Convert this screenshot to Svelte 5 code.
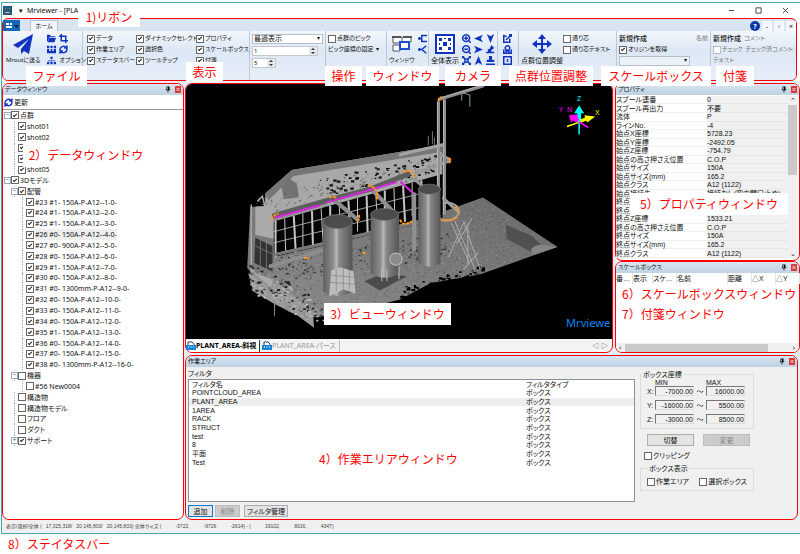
<script lang="ts">
	const icons: Record<string, { d: string; fill?: boolean }> = {
		folder: { d: 'M0 1h4l1 2h6v1H3L1 10H0zM3 5h9l-2 6H1z', fill: true },
		crop: { d: 'M3 0v9h9M0 3h9v9' },
		data: { d: 'M0 1h3v3H0zM4.500 1h3v3h-3zM9 1h3v3H9zM0 5h3v3h2V5h2v3h2V5h3v6H0z', fill: true },
		refresh: { d: 'M1.500 7a4.500 4.500 0 0 1 8-3.500M10.500 5a4.500 4.500 0 0 1-8 3.500M7 4h3.500V.5M5 8H1.500v3.500' },
		nodes: { d: 'M4.500 1h3v3h-3zM0 8h3v3H0zM4.500 8h3v3h-3zM9 8h3v3H9zM5.500 5h1v2h-1zM1 6h10v1H1z', fill: true },
		branch: { d: 'M0 6h5M5 6V2h7M5 6v4h7M2 4v4' },
		fork: { d: 'M0 6h5l6-5M5 6l6 5M2 4v4' },
		zoomin: { d: 'M5.500 1a4.500 4.500 0 1 0 .01 0M9 9l3 3M5.500 3v5M3 5.500h5' },
		zoomout: { d: 'M5.500 1a4.500 4.500 0 1 0 .01 0M9 9l3 3M3 5.500h5' },
		fit: { d: 'M1 1l3 3M11 1L8 4M1 11l3-3M11 11L8 8M4 4h4v4H4zM1 3V1h2M9 1h2v2M1 9v2h2M9 11h2V9' },
		left: { d: 'M0 6l12-5-3 5 3 5z', fill: true },
		right: { d: 'M12 6L0 1l3 5-3 5z', fill: true },
		up: { d: 'M6 0l5 12-5-3-5 3z', fill: true },
		down: { d: 'M6 12L1 0l5 3 5-3z', fill: true },
		tilt: { d: 'M7 0l4 4-4 3v2h4v2H0V9h3L2 6l3-1z', fill: true },
		stamp: { d: 'M4 0h4v5h3v3H1V5h3zM0 10h12v2H0z', fill: true },
		edit: { d: 'M9 6v5H1V3h4M4 8L11 1M8 1h3v3M1 1v2' },
		camera: { d: 'M6 1a3 3 0 1 0 .01 0M1 6v5h10V6M4 11V8h4v3' },
		info: { d: 'M1 1h10v10H1zM6 4v4' }
	};

	const displayChecks = [
		['データ', '作業エリア', 'ステータスバー'],
		['ダイナミックセレクト', '選択色', 'ツールチップ'],
		['プロパティ', 'スケールボックス', '付箋']
	];

	const cameraIcons = ['zoomin', 'left', 'down', 'zoomout', 'right', 'tilt', 'fit', 'up', 'stamp'];

	const groupNotes = [
		{ text: 'ファイル', x: 23, w: 61 },
		{ text: '操作', x: 322, w: 37 },
		{ text: 'ウィンドウ', x: 363, w: 73 },
		{ text: 'カメラ', x: 442, w: 56 },
		{ text: '点群位置調整', x: 506, w: 84 },
		{ text: 'スケールボックス', x: 598, w: 110 },
		{ text: '付箋', x: 713, w: 38 }
	];

	const pipes = [
		'#23 #1- 150A-P-A12--1-0-',
		'#24 #1- 150A-P-A12--2-0-',
		'#25 #1- 150A-P-A12--3-0-',
		'#26 #0- 150A-P-A12--4-0-',
		'#27 #0- 900A-P-A12--5-0-',
		'#28 #0- 150A-P-A12--6-0-',
		'#29 #1- 150A-P-A12--7-0-',
		'#30 #0- 150A-P-A12--8-0-',
		'#31 #0- 1300mm-P-A12--9-0-',
		'#32 #0- 150A-P-A12--10-0-',
		'#33 #0- 150A-P-A12--11-0-',
		'#34 #0- 150A-P-A12--12-0-',
		'#35 #1- 150A-P-A12--13-0-',
		'#36 #0- 150A-P-A12--14-0-',
		'#37 #0- 150A-P-A12--15-0-',
		'#38 #0- 1300mm-P-A12--16-0-'
	];

	type Node = { label: string; level: number; on: boolean; mark?: string };
	const tree: Node[] = [
		{ label: '点群', level: 0, on: true, mark: '−' },
		...['shot01', 'shot02', 'shot03', 'shot04', 'shot05'].map((label) => ({ label, level: 1, on: true })),
		{ label: '3Dモデル', level: 0, on: true, mark: '−' },
		{ label: '配管', level: 1, on: true, mark: '−' },
		...pipes.map((label) => ({ label, level: 2, on: true })),
		{ label: '機器', level: 1, on: false, mark: '−' },
		{ label: '#56 New0004', level: 2, on: false },
		{ label: '構造物', level: 1, on: false },
		{ label: '構造物モデル', level: 1, on: false },
		{ label: 'フロア', level: 1, on: false },
		{ label: 'ダクト', level: 1, on: false },
		{ label: 'サポート', level: 1, on: true, mark: '+' }
	];

	const props = [
		['スプール連番', '0'],
		['スプール再出力', '不要'],
		['流体', 'P'],
		['ラインNo.', '-4'],
		['始点X座標', '5728.23'],
		['始点Y座標', '-2492.05'],
		['始点Z座標', '-754.79'],
		['始点の高さ押さえ位置', 'C.O.P'],
		['始点サイズ', '150A'],
		['始点サイズ(mm)', '165.2'],
		['始点クラス', 'A12 (1122)'],
		['始点接続先', '接続なし(空中開口止め)'],
		['終点X座標', ''],
		['終点Y座標', ''],
		['終点Z座標', '1533.21'],
		['終点の高さ押さえ位置', 'C.O.P'],
		['終点サイズ', '150A'],
		['終点サイズ(mm)', '165.2'],
		['終点クラス', 'A12 (1122)']
	];

	const filters = ['POINTCLOUD_AREA', 'PLANT_AREA', '1AREA', 'RACK', 'STRUCT', 'test', '8', '平面', 'Test'];

	const ranges = [
		['X', '-7000.00', '16000.00'],
		['Y', '-16000.00', '5500.00'],
		['Z', '-3000.00', '8500.00']
	];

	// fixed seed, so the point cloud is the same on every load
	let seed = 7;
	function rnd() {
		seed = (seed * 16807) % 2147483647;
		return seed / 2147483647;
	}

	function cloud(n: number, x: number, y: number, w: number, h: number, slope: number, size = 1) {
		let d = '';
		for (let i = 0; i < n; i++) {
			const px = x + rnd() * w;
			const py = y + rnd() * h + (px - x) * slope;
			const s = size * (0.5 + rnd());
			d += `M${px.toFixed(1)} ${py.toFixed(1)}h${(s * 1.5).toFixed(1)}v${s.toFixed(1)}h${(-s * 1.5).toFixed(1)}z`;
		}
		return d;
	}

	const groundDark = cloud(1600, 250, 245, 310, 90, -0.2, 0.7);
	const groundLight = cloud(1600, 250, 245, 310, 90, -0.2, 0.7);
	const roofHoles = cloud(75, 320, 181, 115, 17, -0.22, 1.6);
	const wallSpeck = cloud(260, 256, 200, 185, 26, -0.24, 0.8);
	const fringe = cloud(110, 400, 288, 85, 14, -0.29, 1.6);
	const rubble = cloud(80, 250, 264, 72, 25, 0.45, 1.4);
	const yard = cloud(220, 278, 258, 170, 26, -0.15, 1);
	const mullions = Array.from({ length: 17 }, (_, i) => 277 + i * 9);
</script>

{#snippet icon(name: string)}
	<svg class="icon" class:fill={icons[name].fill} viewBox="0 0 12 12" aria-hidden="true">
		<path d={icons[name].d} />
	</svg>
{/snippet}

{#snippet check(label: string, on = false, disabled = false)}
	<label class="check" class:disabled><input type="checkbox" checked={on} {disabled} />{label}</label>
{/snippet}

{#snippet caption(text: string)}
	<header class="caption">
		<h2>{text}</h2>
		<button class="pin" aria-label="固定">
			<svg viewBox="0 0 8 8"><path d="M2 0h4v4h1v1H4.500v3h-1V5H1V4h1zM3 1v3h1V1z" /></svg>
		</button>
		<button class="close" aria-label="閉じる">
			<svg viewBox="0 0 8 8"><path d="M2 2l4 4M6 2L2 6" /></svg>
		</button>
	</header>
{/snippet}

{#snippet docIcon()}
	<svg class="doc" viewBox="0 0 10 10" aria-hidden="true">
		<path d="M2 4V1h4l2 2v1" fill="#fff" stroke="#246" />
		<path d="M0 4h10v5H0z" fill="#1784d8" />
		<path d="M2 6h1M4.500 6h1M7 6h1" stroke="#fff" />
	</svg>
{/snippet}

<div class="page">
	<div class="app">
		<header class="titlebar">
			<svg class="logo" viewBox="0 0 10 10" aria-hidden="true">
				<path d="M0 0h10v10H0z" fill="#0b75bd" />
				<path d="M2 2h2v2H2zM6 2h2v2H6zM2 6h6v2H2z" fill="#fff" />
			</svg>
			<span class="quick">▾</span>
			<h1>Mrviewer - [PLANT_AREA]</h1>
			<button aria-label="最小化"><svg viewBox="0 0 8 8"><path d="M1 4h6" /></svg></button>
			<button aria-label="最大化"><svg viewBox="0 0 8 8"><path d="M1 1h6v6H1z" /></svg></button>
			<button aria-label="閉じる"><svg viewBox="0 0 8 8"><path d="M1 1l6 6M7 1L1 7" /></svg></button>
		</header>

		<section class="ribbon">
			<nav>
				<button class="file" aria-label="メニュー">
					<svg viewBox="0 0 14 8"><path d="M1 1h3v2H1zM5 1h2v2H5zM1 4h6v2H1z" fill="#fff" /><path d="M9 3h5l-2.500 3z" fill="#124" /></svg>
				</button>
				<button class="tab">ホーム</button>
				<div class="mdi">
					<button class="help" aria-label="ヘルプ">?</button>
					<button>-</button>
					<button>▫</button>
					<button>×</button>
				</div>
			</nav>
			<div class="groups">
				<div class="group file-group">
					<button class="big send">
						<svg class="plane" viewBox="0 0 20 20" aria-hidden="true"><path d="M20 0L0 11l5 3L16 5 8 15v5l3-3 5 3z" /></svg>
						Mroutに送る
					</button>
					<div class="grid2">
						{@render icon('folder')}{@render icon('crop')}
						{@render icon('data')}{@render icon('refresh')}
						{@render icon('nodes')}<span>オプション</span>
					</div>
				</div>
				<div class="group show">
					{#each displayChecks as col}
						<div class="stack">
							{#each col as label}{@render check(label, true)}{/each}
						</div>
					{/each}
				</div>
				<div class="group stack">
					<span class="select"><select aria-label="表示"><option>最適表示</option></select></span>
					<span class="spin wide"><input aria-label="点の大きさ" value="1" /><i></i></span>
					<span class="spin"><input aria-label="線の太さ" value="5" /><i></i></span>
				</div>
				<div class="group stack">
					{@render check('点群のピック')}
					<button class="drop">ピック座標の固定</button>
				</div>
				<div class="group">
					<button class="big windows">
						<svg viewBox="0 0 20 16" aria-hidden="true">
							<path d="M1 1h9v6H1zM11 1h8v5h-8M1 9h7v6H1z" fill="#fff" stroke="#555" />
							<path d="M0 0h9v2H0zM11 0h9v2h-9z" fill="#555" />
							<path d="M8 6h9v7H8z" fill="#fff" stroke="#1a4fd6" stroke-width="2" />
						</svg>
						ウィンドウ
					</button>
					<div class="icons">{@render icon('branch')}{@render icon('fork')}</div>
				</div>
				<div class="group">
					<button class="big">
						<svg class="all" viewBox="0 0 20 20" aria-hidden="true">
							<path d="M1 1h18v18H1z" fill="#fff" stroke="#1034c0" stroke-width="2" />
							<path d="M4 4h3v3H4zM13 4h3v3h-3zM8 8h4v4H8zM4 13h3v3H4zM13 13h3v3h-3zM9 4h2v1H9zM4 9h1v2H4zM15 9h1v2h-1z" />
						</svg>
						全体表示
					</button>
					<div class="icons three">
						{#each cameraIcons as name}{@render icon(name)}{/each}
					</div>
				</div>
				<div class="group">
					<div class="icons">{@render icon('edit')}{@render icon('camera')}{@render icon('info')}</div>
				</div>
				<div class="group">
					<button class="big">
						<svg class="move" viewBox="0 0 20 20" aria-hidden="true">
							<path d="M10 0l4 5h-3v4h4V6l5 4-5 4v-3h-4v4h3l-4 5-4-5h3v-4H5v3l-5-4 5-4v3h4V5H6z" />
						</svg>
						点群位置調整
					</button>
					<div class="stack">
						{@render check('通り芯')}
						{@render check('通り芯テキスト')}
					</div>
				</div>
				<div class="group stack">
					<div class="spread"><b>新規作成</b><span class="dim">名前</span></div>
					{@render check('オリジンを取得', true)}
					<span class="select empty"><select aria-label="スケールボックス"></select></span>
				</div>
				<div class="group stack">
					<div class="pair"><b>新規作成</b><span class="dim">コメント</span></div>
					<div class="pair">{@render check('チェック', false, true)}<span class="dim">チェック済コメント</span></div>
					<span class="dim">テキスト</span>
				</div>
			</div>
			<span class="note ribbon-note">1)リボン</span>
			<span class="note show-note">表示</span>
			{#each groupNotes as note}
				<span class="note group-note" style="left: {note.x}px; width: {note.w}px">{note.text}</span>
			{/each}
		</section>

		<main>
			<aside class="panel data">
				{@render caption('データウィンドウ')}
				<button class="reload">{@render icon('refresh')}更新</button>
				<ul>
					{#each tree as node, i}
						<li class="level{node.level}" class:current={i === 11}>
							{#if node.mark}<span class="mark">{node.mark}</span>{/if}
							{@render check(node.label, node.on)}
						</li>
					{/each}
				</ul>
				<span class="note data-note">2）データウィンドウ</span>
			</aside>

			<div class="work">
				<div class="upper">
					<section class="panel view">
						<svg class="scene" viewBox="186 87 426 252" preserveAspectRatio="xMidYMid slice" role="img" aria-label="プラント点群">
							<defs>
								<linearGradient id="tank">
									<stop offset="0" stop-color="#606060" />
									<stop offset="0.350" stop-color="#8d8d8d" />
									<stop offset="0.450" stop-color="#b8b8b8" />
									<stop offset="0.550" stop-color="#888" />
									<stop offset="1" stop-color="#555" />
								</linearGradient>
								<linearGradient id="road" x1="0" y1="1" x2="1" y2="0">
									<stop offset="0" stop-color="#8c8c8c" />
									<stop offset="1" stop-color="#6a6a6a" />
								</linearGradient>
								<clipPath id="ground">
									<path d="M249 264L275 250 440 214 482 199 556 248 480 275 430 284 400 300 345 314 312 318 285 298 258 286z" />
								</clipPath>
							</defs>
							<rect x="186" y="87" width="426" height="252" fill="#000" />
							<g clip-path="url(#ground)">
								<path d="M249 264L275 250 440 214 482 199 556 248 480 275 400 304 320 320 258 290z" fill="url(#road)" />
								<path d={groundDark} fill="#444" opacity="0.500" />
								<path d={groundLight} fill="#b5b5b5" opacity="0.400" />
								<path d="M505 226L530 237 541 247 530 253 505 240z" fill="#484848" opacity="0.800" />
								<path d="M529 251q4-6 14-5l13 2-24 8z" fill="#858585" />
							</g>
							<path d={yard} fill="#333" />
							<path d="M267 195L293 172 442 147 442 212 275 254 266 215z" fill="#a8a8a8" />
							<path d="M267 195L293 172 442 147V154L295 178 270 202z" fill="#767676" />
							<path d="M283 188l8-7 7 4 2 14-15 2z" fill="#737373" />
							<path d={wallSpeck} fill="#666" />
							<path d={roofHoles} fill="#111" />
							<path d="M275 223L442 176V220L275 258z" fill="#050505" />
							<g stroke="#c4c4c4">
								{#each mullions as x, i}
									<path d="M{x} {223 - (x - 275) * 0.28}l{i % 3} {36 - (i % 2) * 3}" stroke-width={i % 2 ? 1 : 2} />
								{/each}
								<path d="M275 233L440 190M275 244L440 204M275 255L440 217" stroke-width="0.800" />
								<path d="M275 256L440 219" stroke="#777" stroke-width="3" />
							</g>
							<path d="M252 208l21 2 3 62-18 6-9-9z" fill="#7a7a7a" />
							<path d="M257 208l18-1v33l-18-4z" fill="#aaa" />
							<path d="M257 239l17 8v25l-18-8z" fill="#333" />
							<path d="M257 247l17 8M262 240v27M268 242v28" stroke="#888" stroke-width="0.700" />
							<path d="M253 206v80M259 203l5-5 3 12" stroke="#aaa" stroke-width="1.500" fill="none" />
							<path d="M250 274l32 12 32 26 1 16-16-12-24-12-20-12z" fill="#9a9a9a" />
							<path d={rubble} fill="#222" />
							<path d={rubble} fill="#b5b5b5" transform="translate(2 5)" />
							<path d="M252 272l23 8-2 9zM276 302v14M300 306l8 13M285 298l5 14" fill="#aaa" stroke="#8c8c8c" />
							<path d={fringe} fill="#000" />
							<g fill="none" stroke-linecap="round">
								<path d="M276 220L326 205M332 199l26 22M371 190l22 23M272 267L322 252" stroke="#8d8d8d" stroke-width="4" />
								<path d="M276 217L328 202 370 191 408 176" stroke="#5e5e5e" stroke-width="5" />
								<path d="M277 219L320 207M328 204L396 184M401 184l12 11" stroke="#d927df" stroke-width="2" />
								<path d="M414 196v54" stroke="#909090" stroke-width="4" />
								<path d="M416 175L449 163M449 162L438 155M414 181l12 10M443 200l14 13" stroke="#999" stroke-width="3" />
								<path d="M438 105V198M444 103V215M439 102L482 89" stroke="#8f8f8f" stroke-width="3" />
								<path d="M437 105V198M443 103V215M439 101L481 88" stroke="#d2d2d2" stroke-width="0.600" />
								<path d="M461 94v9M463 96l6 2v11" stroke="#79a786" />
								<path d="M400 157L442 147" stroke="#a4a4a4" stroke-width="3" />
								<path d="M428 139v8M432 134v12M434 140v7" stroke="#777" />
								<path d="M443 205c8-2 16 2 15 9s-13 10-20 6" stroke="#a0a0a0" stroke-width="2" />
								<path d="M454 222l20 48M463 223l16 47M451 225l17 37M456 245l15-25M448 258l15-34M467 225v40M463 270l14-16" stroke="#aaa" />
							</g>
							<g fill="none" stroke="#ff9420" stroke-width="2" stroke-dasharray="3 1">
								<path d="M273 221q2-5 7-6M330 199h8M357 222q4-1 2-6M368 187q11 2 9 15M403 174q9-4 11 5M438 104q0-4 4-4M448 160q4 3 0 5M400 221q3 8 13 1M438 219q10 6 19-1M454 208q5 4 4 8" />
								<path d="M305 259h5M363 254h4" />
							</g>
							<path d="M365 282l18-8 24 3-27 14z" fill="#4b4b4b" />
							<path d="M324 223v69q14 9 29 0V223z" fill="url(#tank)" />
							<ellipse cx="338.500" cy="223" rx="14.500" ry="7" fill="#4c4c4c" stroke="#777" stroke-width="0.700" />
							<path d="M371 216v58q14 9 28 0V216z" fill="url(#tank)" />
							<ellipse cx="385" cy="216" rx="14" ry="6" fill="#4c4c4c" stroke="#777" stroke-width="0.700" />
							<path d="M418 191v73q11 7 22 0V191z" fill="url(#tank)" />
							<ellipse cx="429" cy="191" rx="11" ry="5" fill="#4c4c4c" stroke="#777" stroke-width="0.700" />
							<circle cx="396" cy="260" r="6" fill="#8a8a8a" stroke="#bbb" />
							<path d="M332 271l9-3 13 4 2 22-12-4-14 7z" fill="#bdbdbd" />
							<path d="M331 276l23 2M331 283l24 2M337 270v22M344 269v21M350 271v20" stroke="#878787" stroke-width="0.700" />
							<path d="M382 269v13M387 270v12M399 267v13" stroke="#bcbcbc" />
							<g fill="none" stroke-width="1.500">
								<path d="M577 137V110" stroke="#0ff" />
								<path d="M565 129L588 121" stroke="#ff0" />
								<path d="M586 130L568 119" stroke="#f0f" />
							</g>
							<path d="M577 108l5 8h-3v8h-4v-8h-3z" fill="#0ff" />
							<path d="M593 119l-8 6-1-2-5 2-1-3 5-2-1-2z" fill="#ff0" />
							<path d="M567 118l9-1-1 2 2 3-3 3-3-2-2 2z" fill="#f0f" />
							<g class="axes">
								<text x="575" y="104" fill="#0ff">Z</text>
								<text x="593" y="118" fill="#ff0">X</text>
								<text x="557" y="115" fill="#f0f">Y</text>
								<text x="565" y="115" fill="#f0f">N</text>
							</g>
							<text class="brand" x="564" y="327">Mrviewe</text>
						</svg>
						<nav class="tabs">
							<button class="active">{@render docIcon()}PLANT_AREA-斜視</button>
							<button>{@render docIcon()}PLANT_AREA-パース</button>
							<span>◁</span><span>▷</span>
						</nav>
						<span class="note view-note">3）ビューウィンドウ</span>
					</section>

					<div class="side">
						<section class="panel">
							{@render caption('プロパティ')}
							<div class="scrolled">
								<table>
									<tbody>
										{#each props as [name, value]}
											<tr><th scope="row">{name}</th><td>{value}</td></tr>
										{/each}
									</tbody>
								</table>
								<div class="vbar"><span>⌃</span><i></i><span>⌄</span></div>
							</div>
							<span class="note prop-note">5）プロパティウィンドウ</span>
						</section>
						<section class="panel scale">
							{@render caption('スケールボックス')}
							<table class="columns">
								<thead>
									<tr>
										<th>番…</th><th>表示</th><th>スケ…</th><th class="name">名前</th><th>距離</th><th>△X</th><th>△Y</th>
									</tr>
								</thead>
							</table>
							<p class="side-notes"><span>6）スケールボックスウィンドウ</span><span>7）付箋ウィンドウ</span></p>
							<div class="hbar"><span>‹</span><i></i><span>›</span></div>
						</section>
					</div>
				</div>

				<section class="panel area">
					{@render caption('作業エリア')}
					<div class="area-body">
						<div class="filters">
							<h3>フィルタ</h3>
							<div class="list">
								<table>
									<thead>
										<tr><th>フィルタ名</th><th class="type">フィルタタイプ</th></tr>
									</thead>
									<tbody>
										{#each filters as name, i}
											<tr class:selected={i === 1}><td>{name}</td><td class="type">ボックス</td></tr>
										{/each}
									</tbody>
								</table>
							</div>
							<div class="buttons">
								<button class="add">追加</button>
								<button disabled>削除</button>
								<button class="manage">フィルタ管理</button>
							</div>
						</div>
						<div class="box">
							<fieldset>
								<legend>ボックス座標</legend>
								<div class="minmax"><span>MIN</span><span>MAX</span></div>
								{#each ranges as [axis, min, max]}
									<div class="range">
										<label for="min{axis}">{axis}:</label>
										<input id="min{axis}" value={min} />
										<span>～</span>
										<input aria-label="{axis} MAX" value={max} />
									</div>
								{/each}
							</fieldset>
							<div class="actions"><button>切替</button><button disabled>変更</button></div>
							<div class="clip">{@render check('クリッピング')}</div>
							<fieldset class="boxes">
								<legend>ボックス表示</legend>
								{@render check('作業エリア')}
								{@render check('選択ボックス')}
							</fieldset>
						</div>
					</div>
					<span class="note area-note">4）作業エリアウィンドウ</span>
				</section>
			</div>
		</main>

		<footer>
			<span>表示/選択/全体 (</span><span>17,025,318/</span><span>20,145,803/</span><span>20,145,803) 全体サイズ (</span>
			<span class="num">-3722,</span><span class="num">-9726</span><span class="num">-2614) - (</span>
			<span class="num">19102,</span><span class="num">8016,</span><span class="num">4347)</span>
		</footer>
	</div>
	<p class="status-note">8）ステイタスバー</p>
</div>

<style>
	:global(body) {
		background: #fff;
	}

	.page {
		--red: #f00;
		--blue: #1034c0;
		--teal: #48a9a9;
		display: flex;
		flex-direction: column;
		min-height: 100vh;
		box-sizing: border-box;
		padding: 2px 0 0 1px;
		font-family: 'Noto Sans', 'Noto Sans CJK JP', sans-serif;
		font-size: 7px;
		line-height: 9px;
		color: #111;
		font-feature-settings: 'palt';
	}

	.page :is(h1, h2, h3, p, ul, fieldset) {
		margin: 0;
		padding: 0;
		font-size: inherit;
		font-weight: inherit;
	}

	button,
	input,
	select {
		font: inherit;
		font-feature-settings: inherit;
		color: inherit;
		box-sizing: border-box;
		border: none;
		background: none;
		padding: 0;
		margin: 0;
		border-radius: 0;
	}

	button {
		white-space: nowrap;
	}

	.app {
		flex: 1;
		display: flex;
		flex-direction: column;
		border: 1px solid var(--teal);
		border-right: none;
	}

	.titlebar {
		display: flex;
		align-items: center;
		height: 15px;
		padding: 0 11px 0 1px;
	}

	.logo {
		width: 9px;
		height: 9px;
	}

	.quick {
		margin: 0 4px 0 7px;
	}

	.titlebar h1 {
		flex: 1;
	}

	.titlebar button {
		width: 7px;
		margin-left: 20px;
	}

	.titlebar svg {
		display: block;
		fill: none;
		stroke: #333;
	}

	.ribbon {
		position: relative;
		border: 1px solid var(--red);
		border-radius: 6px;
		margin-right: 3px;
		background: #d9e4f1;
		font-size: 6px;
	}

	.ribbon nav {
		display: flex;
		align-items: flex-end;
		height: 12px;
	}

	.file {
		width: 17px;
		height: 11px;
		background: #1568b5;
	}

	.file svg {
		width: 14px;
		display: block;
		margin: auto;
	}

	.tab {
		width: 28px;
		height: 11px;
		margin-left: 10px;
		background: #f4f8fd;
		border: 1px solid #b3c4d8;
		border-bottom: none;
	}

	.mdi {
		display: flex;
		gap: 2px;
		margin-left: auto;
	}

	.mdi button {
		width: 10px;
		height: 10px;
		background: #f4f8fd;
		font-size: 7px;
	}

	.mdi .help {
		border-radius: 50%;
		background: #0b35a8;
		color: #fff;
		font-weight: bold;
	}

	.groups {
		display: grid;
		grid-template-columns: 80px 167px 76px 61px 42px 69px 21px 98px 94px 1fr;
		height: 49px;
		background: linear-gradient(#f3f7fc, #dde8f5 40%, #e6eef8);
		border-radius: 0 0 5px 5px;
	}

	.group {
		display: flex;
		padding: 3px 2px 2px;
		border-right: 1px solid #b9c8da;
		min-width: 0;
		white-space: nowrap;
	}

	.group:last-child {
		border-right: none;
	}

	.stack {
		display: flex;
		flex-direction: column;
		gap: 2px;
		align-items: flex-start;
	}

	.show {
		display: grid;
		grid-template-columns: 49px 60px 50px;
		padding-left: 4px;
	}

	.check {
		display: flex;
		align-items: center;
		gap: 1px;
		white-space: nowrap;
	}

	.check.disabled,
	.dim {
		color: #777;
	}

	.check input {
		appearance: none;
		flex: none;
		width: 8px;
		height: 8px;
		background: #fff;
		border: 1px solid #666;
		display: grid;
		place-items: center;
	}

	.check.disabled input {
		border-color: #bbb;
	}

	.check input:checked::after {
		content: '';
		width: 1px;
		height: 3px;
		margin-bottom: 1px;
		border: solid #111;
		border-width: 0 1px 1px 0;
		transform: rotate(45deg);
	}

	.icon {
		flex: none;
		width: 9px;
		height: 9px;
		fill: none;
		stroke: var(--blue);
		stroke-width: 2;
	}

	.icon.fill {
		fill: var(--blue);
		stroke: none;
	}

	.big {
		display: flex;
		flex-direction: column;
		align-items: center;
		justify-content: flex-start;
		gap: 2px;
		flex: none;
		font-size: 7px;
	}

	.send,
	.windows {
		font-size: 6px;
	}

	.big svg {
		width: 20px;
		height: 20px;
		fill: var(--blue);
	}

	.file-group {
		gap: 7px;
		padding-left: 3px;
	}

	.grid2 {
		display: grid;
		grid-template-columns: 9px 9px;
		gap: 2px 3px;
		align-content: start;
	}

	.icons {
		display: grid;
		grid-template-columns: 9px;
		gap: 2px;
		margin-left: 3px;
		align-content: start;
	}

	.three {
		grid-template-columns: 9px 9px 9px;
		gap: 2px 3px;
	}

	.select {
		position: relative;
		width: 71px;
		height: 10px;
		box-sizing: border-box;
		background: #fff;
		border: 1px solid #b5bfcb;
	}

	.select::after {
		content: '▾';
		position: absolute;
		right: 2px;
		top: -1px;
		pointer-events: none;
	}

	.select select {
		appearance: none;
		display: block;
		width: 100%;
		height: 8px;
		line-height: 8px;
		padding-left: 1px;
		font-size: 7px;
	}

	.empty {
		background: #edf2f8;
	}

	.spin {
		display: flex;
		align-items: center;
		width: 24px;
		height: 10px;
		box-sizing: border-box;
		border: 1px solid #c0c8d2;
		background: #fff;
	}

	.spin.wide {
		width: 66px;
	}

	.spin input {
		flex: 1;
		min-width: 0;
		width: 0;
		height: 8px;
		padding-left: 1px;
	}

	/* up and down arrows */
	.spin i {
		display: flex;
		flex-direction: column;
		align-items: center;
		justify-content: center;
		gap: 2px;
		width: 8px;
		height: 8px;
		background: #e8e8e8;
	}

	.spin i::before,
	.spin i::after {
		content: '';
		border: 2px solid transparent;
		border-top: none;
		border-bottom: 2px solid #333;
	}

	.spin i::after {
		border-bottom: none;
		border-top: 2px solid #333;
	}

	.drop::after {
		content: '▾';
		margin-left: 3px;
	}

	.spread,
	.pair {
		display: flex;
		gap: 3px;
	}

	.spread {
		align-self: stretch;
		justify-content: space-between;
	}

	b {
		font-size: 7px;
		font-weight: 500;
	}

	.note {
		position: absolute;
		z-index: 2;
		background: #fff;
		color: var(--red);
		font-size: 12px;
		line-height: 20px;
		text-align: center;
		white-space: nowrap;
		font-feature-settings: normal;
		font-family: 'Noto Sans CJK JP', sans-serif;
	}

	.ribbon-note {
		left: 75px;
		top: -12px;
		width: 62px;
	}

	.show-note {
		left: 183px;
		top: 43px;
		width: 37px;
	}

	.group-note {
		top: 47px;
	}

	main {
		flex: 1;
		display: flex;
		gap: 1px;
		padding-top: 2px;
		background: #e4eef5;
	}

	.panel {
		position: relative;
		display: flex;
		flex-direction: column;
		box-sizing: border-box;
		border: 1px solid var(--red);
		border-radius: 7px;
		background: #fff;
	}

	.caption {
		display: flex;
		align-items: center;
		gap: 4px;
		height: 11px;
		padding: 0 2px;
		background: linear-gradient(#d8e4f0, #bfd2e4);
		border-radius: 6px 6px 0 0;
		font-size: 6px;
	}

	.caption h2 {
		flex: 1;
	}

	.caption button {
		width: 6px;
		height: 7px;
	}

	.caption svg {
		display: block;
		width: 6px;
		height: 7px;
	}

	.close {
		background: #d63a3a;
	}

	.close svg {
		fill: none;
		stroke: #fff;
	}

	.data {
		width: 182px;
		flex: none;
	}

	.reload {
		display: flex;
		align-items: center;
		gap: 1px;
		height: 15px;
		padding-left: 1px;
		border-bottom: 1px solid #999;
	}

	ul {
		display: grid;
		grid-auto-rows: 1fr;
		min-height: 336px;
		list-style: none;
	}

	li {
		position: relative;
		display: flex;
		align-items: center;
		justify-self: start;
		padding-left: 8px;
	}

	.level1 {
		padding-left: 15px;
	}

	.level2 {
		padding-left: 23px;
	}

	/* tree guide line in front of each child */
	.level1::before,
	.level2::before {
		content: '';
		align-self: stretch;
		width: 2px;
		margin-left: -4px;
		margin-right: 1px;
		border-left: 1px dotted #aaa;
	}

	.mark {
		position: absolute;
		left: 1px;
		width: 5px;
		height: 5px;
		border: 1px solid #9ab;
		background: #fff;
		color: #248;
		font-size: 6px;
		line-height: 5px;
		text-align: center;
	}

	.level1 .mark {
		left: 8px;
	}

	.current {
		background: linear-gradient(90deg, transparent 32px, #eee 32px);
	}

	.data-note {
		left: 20px;
		top: 59px;
		width: 126px;
		line-height: 24px;
	}

	.work {
		flex: 1;
		min-width: 0;
		display: flex;
		flex-direction: column;
		gap: 2px;
	}

	.upper {
		flex: 1;
		display: flex;
		gap: 2px;
	}

	.view {
		flex: 1;
		min-width: 0;
		background: #f3f3f3;
	}

	.scene {
		flex: 1;
		width: 100%;
		height: 0;
		min-height: 252px;
		border-radius: 6px 6px 0 0;
	}

	.axes {
		font-size: 7px;
	}

	.brand {
		font-size: 11px;
		fill: #0a84f0;
	}

	.tabs {
		display: flex;
		align-items: center;
		height: 13px;
		gap: 2px;
		padding-right: 4px;
		color: #555;
	}

	.tabs button {
		display: flex;
		align-items: center;
		height: 12px;
		padding-right: 3px;
		border-right: 1px solid #bbb;
		color: #999;
	}

	.tabs .active {
		color: #000;
		font-weight: bold;
		background: #fff;
		border-right-color: #333;
		border-radius: 0 0 0 6px;
	}

	.tabs button + span {
		margin-left: auto;
	}

	.doc {
		width: 10px;
		height: 10px;
	}

	.view-note {
		left: 138px;
		top: 219px;
		width: 127px;
		line-height: 22px;
	}

	.side {
		width: 185px;
		flex: none;
		display: flex;
		flex-direction: column;
	}

	.scrolled {
		display: flex;
		padding: 1px 2px 2px 0;
	}

	table {
		border-collapse: collapse;
		table-layout: fixed;
		width: 100%;
		line-height: 8px;
		font-family: 'Liberation Sans', 'Noto Sans CJK JP', sans-serif;
	}

	th,
	td {
		padding: 0;
		font-weight: normal;
		text-align: left;
		white-space: nowrap;
	}

	.scrolled table {
		height: 162px;
		background: #f0f0f0;
	}

	.scrolled th {
		width: 91px;
		background: #fff;
		border-bottom: 1px solid #f0f0f0;
		line-height: 7px;
	}

	.scrolled td {
		border-bottom: 1px solid #e6e6e6;
		line-height: 7px;
	}

	.vbar {
		flex: none;
		width: 9px;
		display: flex;
		flex-direction: column;
		align-items: center;
		background: #f0f0f0;
	}

	.vbar i {
		width: 9px;
		height: 70px;
		margin-bottom: auto;
		background: #c9c9c9;
	}

	.prop-note {
		left: 14px;
		top: 109px;
		width: 158px;
		line-height: 22px;
	}

	.scale {
		flex: 1;
	}

	.columns th {
		width: 23px;
		height: 11px;
		border-right: 1px solid #e4e4e4;
	}

	.columns th:first-child {
		width: 16px;
	}

	.columns th:nth-child(2) {
		width: 19px;
	}

	.columns .name {
		width: 50px;
	}

	.page .side-notes {
		display: flex;
		flex-direction: column;
		flex: 1;
		padding-left: 6px;
		color: var(--red);
		font-size: 12px;
		line-height: 20px;
		font-family: 'Noto Sans CJK JP', sans-serif;
		font-feature-settings: normal;
		white-space: nowrap;
	}

	.hbar {
		display: flex;
		align-items: center;
		gap: 4px;
		padding: 0 4px 0 3px;
		height: 9px;
		background: #f0f0f0;
		border-radius: 0 0 6px 6px;
	}

	.hbar i {
		width: 143px;
		height: 8px;
		background: #c9c9c9;
	}

	.hbar span:last-child {
		margin-left: auto;
	}

	.area {
		min-height: 165px;
		margin-right: 2px;
		background: #f0f0f0;
	}

	.area-body {
		flex: 1;
		display: flex;
		gap: 5px;
		padding: 1px 43px 2px 2px;
		font-family: 'Liberation Sans', 'Noto Sans CJK JP', sans-serif;
	}

	.filters {
		flex: 1;
		display: flex;
		flex-direction: column;
	}

	h3 {
		line-height: 11px;
	}

	.list {
		flex: 1;
		background: #fff;
		border: 1px solid #8a939d;
	}

	.list table {
		height: 86px;
		margin-top: 1px;
	}

	.list :is(th, td) {
		padding-left: 3px;
	}

	.list .type {
		width: 108px;
	}

	.selected {
		background: #eee;
	}

	.buttons {
		display: flex;
		gap: 2px;
		padding-top: 3px;
	}

	.buttons button,
	.actions button {
		height: 12px;
		background: #e3e3e3;
		border: 1px solid #adadad;
	}

	.buttons button {
		width: 25px;
	}

	.buttons .add {
		border: 1px solid #0078d7;
	}

	.buttons .manage {
		width: 44px;
		margin-left: 2px;
	}

	.area-body button:disabled {
		background: #ccc;
		color: #888;
		border-color: #bbb;
	}

	.box {
		width: 114px;
		flex: none;
		padding-top: 2px;
	}

	fieldset {
		min-width: 0;
		border: 1px solid #dcdcdc;
		font: inherit;
	}

	legend {
		padding: 0 1px;
		margin-left: 1px;
	}

	.minmax {
		display: grid;
		grid-template-columns: 51px 1fr;
		padding-left: 14px;
		line-height: 7px;
	}

	.range {
		display: flex;
		align-items: center;
		padding: 0 8px 4px 6px;
	}

	.range label {
		width: 8px;
		flex: none;
	}

	.range input {
		flex: 1;
		min-width: 0;
		width: 0;
		height: 10px;
		text-align: right;
		border: 1px solid #ddd;
		border-top-color: #777;
		border-left-color: #777;
	}

	.range span {
		width: 12px;
		text-align: center;
	}

	.actions {
		display: grid;
		grid-template-columns: 47px 47px;
		gap: 9px;
		padding: 5px 0 5px 7px;
	}

	.clip {
		padding-left: 4px;
	}

	.page .boxes {
		display: flex;
		justify-content: space-between;
		margin-top: 4px;
		padding: 4px 6px;
	}

	.area-note {
		left: 133px;
		top: 93px;
	}

	footer {
		display: flex;
		align-items: center;
		gap: 4px;
		height: 13px;
		padding-left: 4px;
		background: #f0f0f0;
		color: #444;
		font-family: 'Liberation Sans', 'Noto Sans CJK JP', sans-serif;
		font-size: 5px;
		white-space: nowrap;
	}

	.num {
		margin-left: 10px;
	}

	.page .status-note {
		padding-left: 7px;
		color: var(--red);
		font-family: 'Noto Sans CJK JP', sans-serif;
		font-size: 12px;
		line-height: 20px;
		font-feature-settings: normal;
	}
</style>
